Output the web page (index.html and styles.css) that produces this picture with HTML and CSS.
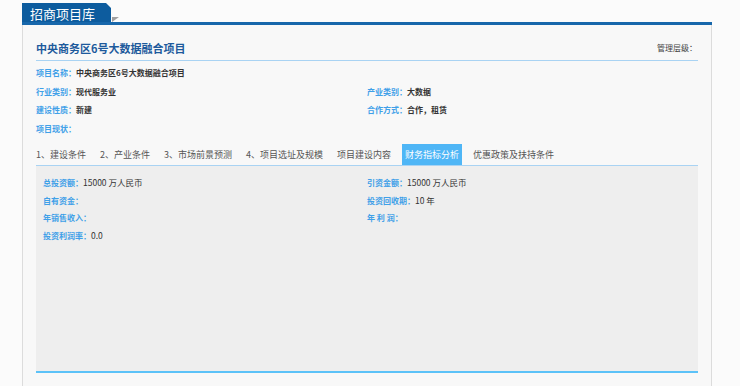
FILE: index.html
```html
<!DOCTYPE html>
<html lang="zh-CN">
<head>
    <meta charset="UTF-8">
    <title>招商项目库</title>
    <link rel="stylesheet" href="styles.css">
</head>
<body>
    <div class="header">
        <div class="header-tab">招商项目库</div>
        <div class="header-fold"></div>
    </div>
    <div class="panel">
        <div class="title-row">
            <h1 class="title">中央商务区6号大数据融合项目</h1>
            <span class="level">管理层级：</span>
        </div>
        <div class="info">
            <div class="info-item full"><span class="label">项目名称：</span>中央商务区6号大数据融合项目</div>
            <div class="info-item"><span class="label">行业类别：</span>现代服务业</div>
            <div class="info-item"><span class="label">产业类别：</span>大数据</div>
            <div class="info-item"><span class="label">建设性质：</span>新建</div>
            <div class="info-item"><span class="label">合作方式：</span>合作，租赁</div>
            <div class="info-item full"><span class="label">项目现状：</span></div>
        </div>
        <ul class="tabs">
            <li>1、建设条件</li>
            <li>2、产业条件</li>
            <li>3、市场前景预测</li>
            <li>4、项目选址及规模</li>
            <li>项目建设内容</li>
            <li class="active">财务指标分析</li>
            <li>优惠政策及扶持条件</li>
        </ul>
        <div class="tab-body">
            <div class="row"><span class="label">总投资额：</span>15000 万人民币</div>
            <div class="row"><span class="label">引资金额：</span>15000 万人民币</div>
            <div class="row"><span class="label">自有资金：</span></div>
            <div class="row"><span class="label">投资回收期：</span>10 年</div>
            <div class="row"><span class="label">年销售收入：</span></div>
            <div class="row"><span class="label">年 利 润：</span></div>
            <div class="row full"><span class="label">投资利润率：</span>0.0</div>
        </div>
    </div>
</body>
</html>
```

FILE: styles.css
```css
body {
    margin: 0;
    background-color: #fbfbfb;
    font-family: "Noto Sans CJK SC", "Noto Sans", sans-serif;
    color: #333;
}
.header {
    display: flex;
    align-items: flex-end;
    margin: 3px 28px 0 22px;
    border-bottom: 3px solid #1767ab;
}
.header-tab {
    width: 81px;
    height: 19px;
    padding-left: 8px;
    background-color: #0d5c9e;
    color: #fff;
    font-size: 13px;
    line-height: 21px;
    clip-path: polygon(0 0, 84px 0, 89px 5px, 89px 100%, 0 100%);
}
.header-fold {
    width: 0;
    height: 0;
    border-top: 5px solid #a0a0a0;
    border-right: 7px solid transparent;
    margin-left: 1px;
}
.panel {
    margin: 0 28px 0 22px;
    padding: 0 13px;
    min-height: 361px;
    background-color: #f8f8f8;
    border-left: 1px solid #dcdcdc;
    border-right: 1px solid #dcdcdc;
}
.title-row {
    display: flex;
    justify-content: space-between;
    align-items: center;
    height: 35px;
    border-bottom: 1px solid #a9d3f3;
}
.title {
    margin: 10px 0 0;
    font-size: 11px;
    font-weight: bold;
    color: #1d5a9c;
}
.level {
    margin: 9px 1px 0 0;
    font-size: 8px;
    color: #444;
}
.info {
    display: grid;
    grid-template-columns: 1fr 1fr;
    padding-top: 3px;
    font-size: 8px;
    font-weight: bold;
    line-height: 18.5px;
}
.info .full {
    grid-column: 1 / 3;
}
.label {
    color: #3fa0e8;
    font-weight: bold;
}
.tabs {
    display: flex;
    gap: 8px;
    margin: 6px 0 0;
    padding: 0;
    list-style: none;
    border-bottom: 1px solid #a9d3f3;
}
.tabs li {
    padding: 0 3px;
    font-size: 9px;
    line-height: 21px;
    color: #555;
}
.tabs li:first-child {
    padding-left: 0;
}
.tabs li.active {
    background-color: #4fb6f6;
    color: #fff;
}
.tab-body {
    display: grid;
    grid-template-columns: 1fr 1fr;
    align-content: start;
    height: 207px;
    box-sizing: border-box;
    padding: 8px 7px 0;
    background-color: #eeeeee;
    border-bottom: 2px solid #5cc2f8;
    line-height: 17.7px;
}
.tab-body .full {
    grid-column: 1 / 3;
}
.row {
    font-size: 8.5px;
}
.row .label {
    font-size: 8px;
}
```
